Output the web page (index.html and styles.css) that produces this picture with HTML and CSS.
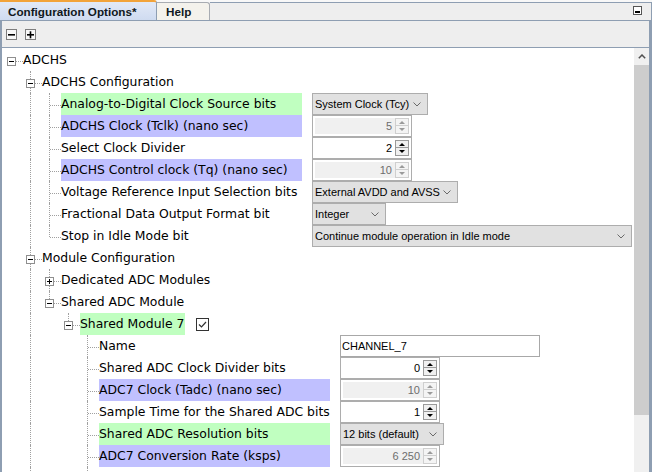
FILE: index.html
```html
<!DOCTYPE html>
<html>
<head>
<meta charset="utf-8">
<title>Configuration Options</title>
<link rel="stylesheet" href="styles.css">
</head>
<body>
<div class="panel">
  <div class="tabbar">
    <div class="tab active">Configuration Options*</div>
    <div class="tab help">Help</div>
    <div class="tabfill">
      <svg class="minbtn" width="9" height="9" viewBox="0 0 9 9"><rect x="0.5" y="0.5" width="8" height="8" fill="#fff" stroke="#555"/><rect x="2" y="5" width="5" height="2" fill="#000"/></svg>
    </div>
  </div>
  <div class="toolbar">
    <span class="tbtn"><svg width="11" height="11" viewBox="0 0 11 11"><rect x="0.5" y="0.5" width="10" height="10" fill="#f7f7f7" stroke="#7d7d7d"/><rect x="2" y="5" width="7" height="1.6" fill="#000"/></svg></span>
    <span class="tbtn"><svg width="11" height="11" viewBox="0 0 11 11"><rect x="0.5" y="0.5" width="10" height="10" fill="#f7f7f7" stroke="#7d7d7d"/><rect x="2" y="5" width="7" height="1.6" fill="#000"/><rect x="4.7" y="2.3" width="1.6" height="7" fill="#000"/></svg></span>
  </div>
  <div class="content">
    <div class="tree">
      <div class="row">
        <span class="cn root"><svg class="exp" width="9" height="9" viewBox="0 0 9 9"><rect x="0.5" y="0.5" width="8" height="8" fill="#fff" stroke="#8f8f8f"/><path d="M2 4.5h5" stroke="#000"/></svg></span>
        <span class="lbl">ADCHS</span>
      </div>
      <div class="row">
        <span class="g"></span>
        <span class="cn t"><svg class="exp" width="9" height="9" viewBox="0 0 9 9"><rect x="0.5" y="0.5" width="8" height="8" fill="#fff" stroke="#8f8f8f"/><path d="M2 4.5h5" stroke="#000"/></svg></span>
        <span class="lbl">ADCHS Configuration</span>
      </div>
      <div class="row">
        <span class="g"></span><span class="g v"></span>
        <span class="cn t"></span>
        <span class="lbl w2 green">Analog-to-Digital Clock Source bits</span>
        <div class="val combo" style="width:116px"><span>System Clock (Tcy)</span><svg width="8" height="5" viewBox="0 0 8 5"><path d="M0.5 0.5l3.5 3.5 3.5-3.5" fill="none" stroke="#6a6a6a"/></svg></div>
      </div>
      <div class="row">
        <span class="g"></span><span class="g v"></span>
        <span class="cn t"></span>
        <span class="lbl w2 blue">ADCHS Clock (Tclk) (nano sec)</span>
        <div class="val spin dis"><span class="f">5</span><span class="sb"><span class="sbb"><svg width="6" height="3" viewBox="0 0 6 3"><path d="M0 3h6L3 0z"/></svg></span><span class="sbb"><svg width="6" height="3" viewBox="0 0 6 3"><path d="M0 0h6L3 3z"/></svg></span></span></div>
      </div>
      <div class="row">
        <span class="g"></span><span class="g v"></span>
        <span class="cn t"></span>
        <span class="lbl w2">Select Clock Divider</span>
        <div class="val spin"><span class="f">2</span><span class="sb"><span class="sbb"><svg width="6" height="3" viewBox="0 0 6 3"><path d="M0 3h6L3 0z"/></svg></span><span class="sbb"><svg width="6" height="3" viewBox="0 0 6 3"><path d="M0 0h6L3 3z"/></svg></span></span></div>
      </div>
      <div class="row">
        <span class="g"></span><span class="g v"></span>
        <span class="cn t"></span>
        <span class="lbl w2 blue">ADCHS Control clock (Tq) (nano sec)</span>
        <div class="val spin dis"><span class="f">10</span><span class="sb"><span class="sbb"><svg width="6" height="3" viewBox="0 0 6 3"><path d="M0 3h6L3 0z"/></svg></span><span class="sbb"><svg width="6" height="3" viewBox="0 0 6 3"><path d="M0 0h6L3 3z"/></svg></span></span></div>
      </div>
      <div class="row">
        <span class="g"></span><span class="g v"></span>
        <span class="cn t"></span>
        <span class="lbl w2">Voltage Reference Input Selection bits</span>
        <div class="val combo" style="width:146px"><span>External AVDD and AVSS</span><svg width="8" height="5" viewBox="0 0 8 5"><path d="M0.5 0.5l3.5 3.5 3.5-3.5" fill="none" stroke="#6a6a6a"/></svg></div>
      </div>
      <div class="row">
        <span class="g"></span><span class="g v"></span>
        <span class="cn t"></span>
        <span class="lbl w2">Fractional Data Output Format bit</span>
        <div class="val combo" style="width:74px"><span>Integer</span><svg width="8" height="5" viewBox="0 0 8 5"><path d="M0.5 0.5l3.5 3.5 3.5-3.5" fill="none" stroke="#6a6a6a"/></svg></div>
      </div>
      <div class="row">
        <span class="g"></span><span class="g v"></span>
        <span class="cn l"></span>
        <span class="lbl w2">Stop in Idle Mode bit</span>
        <div class="val combo" style="width:320px"><span>Continue module operation in Idle mode</span><svg width="8" height="5" viewBox="0 0 8 5"><path d="M0.5 0.5l3.5 3.5 3.5-3.5" fill="none" stroke="#6a6a6a"/></svg></div>
      </div>
      <div class="row">
        <span class="g"></span>
        <span class="cn t"><svg class="exp" width="9" height="9" viewBox="0 0 9 9"><rect x="0.5" y="0.5" width="8" height="8" fill="#fff" stroke="#8f8f8f"/><path d="M2 4.5h5" stroke="#000"/></svg></span>
        <span class="lbl">Module Configuration</span>
      </div>
      <div class="row">
        <span class="g"></span><span class="g v"></span>
        <span class="cn t"><svg class="exp" width="9" height="9" viewBox="0 0 9 9"><rect x="0.5" y="0.5" width="8" height="8" fill="#fff" stroke="#8f8f8f"/><path d="M2 4.5h5M4.5 2v5" stroke="#000"/></svg></span>
        <span class="lbl">Dedicated ADC Modules</span>
      </div>
      <div class="row">
        <span class="g"></span><span class="g v"></span>
        <span class="cn l"><svg class="exp" width="9" height="9" viewBox="0 0 9 9"><rect x="0.5" y="0.5" width="8" height="8" fill="#fff" stroke="#8f8f8f"/><path d="M2 4.5h5" stroke="#000"/></svg></span>
        <span class="lbl">Shared ADC Module</span>
      </div>
      <div class="row">
        <span class="g"></span><span class="g v"></span><span class="g"></span>
        <span class="cn l"><svg class="exp" width="9" height="9" viewBox="0 0 9 9"><rect x="0.5" y="0.5" width="8" height="8" fill="#fff" stroke="#8f8f8f"/><path d="M2 4.5h5" stroke="#000"/></svg></span>
        <span class="lbl green pad">Shared Module 7</span>
        <svg class="chk" width="13" height="13" viewBox="0 0 13 13"><rect x="0.5" y="0.5" width="12" height="12" fill="#fff" stroke="#333"/><path d="M3 6.5l2.5 2.5 4.5-5" fill="none" stroke="#333" stroke-width="1.2"/></svg>
      </div>
      <div class="row">
        <span class="g"></span><span class="g v"></span><span class="g"></span><span class="g"></span>
        <span class="cn t"></span>
        <span class="lbl w4">Name</span>
        <div class="val text">CHANNEL_7</div>
      </div>
      <div class="row">
        <span class="g"></span><span class="g v"></span><span class="g"></span><span class="g"></span>
        <span class="cn t"></span>
        <span class="lbl w4">Shared ADC Clock Divider bits</span>
        <div class="val spin"><span class="f">0</span><span class="sb"><span class="sbb"><svg width="6" height="3" viewBox="0 0 6 3"><path d="M0 3h6L3 0z"/></svg></span><span class="sbb"><svg width="6" height="3" viewBox="0 0 6 3"><path d="M0 0h6L3 3z"/></svg></span></span></div>
      </div>
      <div class="row">
        <span class="g"></span><span class="g v"></span><span class="g"></span><span class="g"></span>
        <span class="cn t"></span>
        <span class="lbl w4 blue">ADC7 Clock (Tadc) (nano sec)</span>
        <div class="val spin dis"><span class="f">10</span><span class="sb"><span class="sbb"><svg width="6" height="3" viewBox="0 0 6 3"><path d="M0 3h6L3 0z"/></svg></span><span class="sbb"><svg width="6" height="3" viewBox="0 0 6 3"><path d="M0 0h6L3 3z"/></svg></span></span></div>
      </div>
      <div class="row">
        <span class="g"></span><span class="g v"></span><span class="g"></span><span class="g"></span>
        <span class="cn t"></span>
        <span class="lbl w4">Sample Time for the Shared ADC bits</span>
        <div class="val spin"><span class="f">1</span><span class="sb"><span class="sbb"><svg width="6" height="3" viewBox="0 0 6 3"><path d="M0 3h6L3 0z"/></svg></span><span class="sbb"><svg width="6" height="3" viewBox="0 0 6 3"><path d="M0 0h6L3 3z"/></svg></span></span></div>
      </div>
      <div class="row">
        <span class="g"></span><span class="g v"></span><span class="g"></span><span class="g"></span>
        <span class="cn t"></span>
        <span class="lbl w4 green">Shared ADC Resolution bits</span>
        <div class="val combo" style="width:104px"><span>12 bits (default)</span><svg width="8" height="5" viewBox="0 0 8 5"><path d="M0.5 0.5l3.5 3.5 3.5-3.5" fill="none" stroke="#6a6a6a"/></svg></div>
      </div>
      <div class="row">
        <span class="g"></span><span class="g v"></span><span class="g"></span><span class="g"></span>
        <span class="cn t"></span>
        <span class="lbl w4 blue">ADC7 Conversion Rate (ksps)</span>
        <div class="val spin dis"><span class="f">6 250</span><span class="sb"><span class="sbb"><svg width="6" height="3" viewBox="0 0 6 3"><path d="M0 3h6L3 0z"/></svg></span><span class="sbb"><svg width="6" height="3" viewBox="0 0 6 3"><path d="M0 0h6L3 3z"/></svg></span></span></div>
      </div>
      <div class="row">
        <span class="g"></span><span class="g v"></span><span class="g"></span><span class="g"></span>
        <span class="cn t"></span>
      </div>
    </div>
    <div class="vscroll">
      <div class="sbtn"><svg width="8" height="5" viewBox="0 0 8 5"><path d="M0.8 4.2L4 1l3.2 3.2" fill="none" stroke="#505050" stroke-width="1.5"/></svg></div>
      <div class="thumb"></div>
      <div class="track"></div>
    </div>
  </div>
</div>
</body>
</html>
```

FILE: styles.css
```css
* { box-sizing: border-box; }
html, body { margin: 0; padding: 0; }
body {
  width: 652px;
  height: 472px;
  overflow: hidden;
  background: #fff;
  font-family: "DejaVu Sans", sans-serif;
  color: #000;
}
.panel {
  width: 652px;
  height: 472px;
  display: flex;
  flex-direction: column;
  overflow: hidden;
}

/* tab strip */
.tabbar {
  flex: none;
  height: 21px;
  display: flex;
  align-items: flex-end;
  background: #f8f8f8;
  border-bottom: 1px solid #8e9eb2;
}
.tab {
  font: bold 11.7px "Liberation Sans", Arial, sans-serif;
  color: #101820;
  display: flex;
  align-items: center;
  flex: none;
}
.tab.active {
  width: 157px;
  height: 20px;
  padding-left: 8px;
  border-top: 2px solid #f2a33a;
  border-right: 1px solid #8e9eb2;
  border-top-right-radius: 3px;
  background: linear-gradient(#e2e9f7, #cfdbf0);
}
.tab.help {
  width: 53px;
  height: 18px;
  padding-left: 9px;
  border-top: 1px solid #a8acb2;
  border-right: 1px solid #a8acb2;
  border-top-right-radius: 3px;
  background: #f4f2ec;
}
.tabfill {
  flex: 1;
  height: 18px;
  border-top: 1px solid #8e9eb2;
  border-right: 1px solid #8e9eb2;
  background: #eeeeee;
  display: flex;
  align-items: center;
  justify-content: flex-end;
  padding-right: 9px;
}
.minbtn { display: block; margin-top: -2px; }

/* toolbar */
.toolbar {
  flex: none;
  height: 27px;
  background: #eeeeee;
  border-left: 2px solid #8e9eb2;
  border-right: 3px solid #8e9eb2;
  border-bottom: 1px solid #8e9eb2;
  display: flex;
  align-items: center;
  gap: 8px;
  padding-left: 4px;
}
.tbtn { display: flex; }

/* content */
.content {
  flex: 1;
  display: flex;
  min-height: 0;
  border-left: 2px solid #8e9eb2;
  border-right: 3px solid #8e9eb2;
}
.tree {
  flex: 1;
  padding-top: 1px;
  overflow: hidden;
  min-width: 0;
}
.row {
  display: flex;
  align-items: center;
  height: 22px;
}
.g {
  flex: none;
  width: 19px;
  height: 22px;
  position: relative;
}
.cn {
  flex: none;
  width: 21px;
  height: 22px;
  position: relative;
  padding: 8px 0 0 5px;
  align-self: stretch;
}
.g.v::before,
.cn.t::before,
.cn.l::before {
  content: "";
  position: absolute;
  left: 9px;
  top: 0;
  bottom: 0;
  border-left: 1px dotted #a0a0a0;
}
.cn.l::before { bottom: auto; height: 12px; }
.cn::after {
  content: "";
  position: absolute;
  left: 10px;
  right: 0;
  top: 12px;
  border-top: 1px dotted #a0a0a0;
}
.exp {
  display: block;
  position: relative;
  z-index: 1;
}
.lbl {
  flex: none;
  font-size: 12.4px;
  line-height: 22px;
  height: 22px;
  white-space: nowrap;
}
.lbl.pad { padding-right: 1px; }
.w2 { width: 241px; }
.w4 { width: 231px; }
.green { background: #c0ffc0; }
.blue { background: #c0c0ff; }
.chk { flex: none; margin-left: 11px; display: block; }

/* editors */
.val {
  flex: none;
  margin-left: 10px;
  font: 11px "Liberation Sans", Arial, sans-serif;
}
.combo {
  height: 22px;
  border: 1px solid #adadad;
  background: #e1e1e1;
  display: flex;
  align-items: center;
  padding: 0 6px 0 2px;
  white-space: nowrap;
}
.combo span { flex: none; }
.combo svg { display: block; flex: none; margin-left: auto; padding-left: 2px; box-sizing: content-box; }
.spin {
  width: 100px;
  height: 22px;
  border: 1px solid #adadad;
  background: #fff;
  padding: 2px;
  display: flex;
}
.spin .f {
  flex: 1;
  text-align: right;
  padding-right: 3px;
  line-height: 16px;
}
.spin.dis .f { background: #f0f0f0; color: #6d6d6d; }
.sb {
  width: 14px;
  display: flex;
  flex-direction: column;
}
.sbb {
  height: 8px;
  border: 1px solid #9a9a9a;
  background: #f0f0f0;
  display: flex;
  align-items: center;
  justify-content: center;
}
.sbb + .sbb { border-top: none; height: 8px; }
.sbb svg { display: block; fill: #000; }
.spin.dis .sbb { border-color: #cfcfcf; background: #f4f4f4; }
.spin.dis .sbb svg { fill: #9a9a9a; }
.text {
  width: 200px;
  height: 22px;
  border: 1px solid #a8a8a8;
  background: #fff;
  padding-left: 1px;
  line-height: 20px;
}

/* scrollbar */
.vscroll {
  flex: none;
  width: 15px;
  background: #f0f0f0;
  display: flex;
  flex-direction: column;
}
.sbtn {
  height: 17px;
  display: flex;
  align-items: center;
  justify-content: center;
}
.sbtn svg { display: block; }
.thumb {
  height: 350px;
  background: #cdcdcd;
}
.track { flex: 1; }
```
